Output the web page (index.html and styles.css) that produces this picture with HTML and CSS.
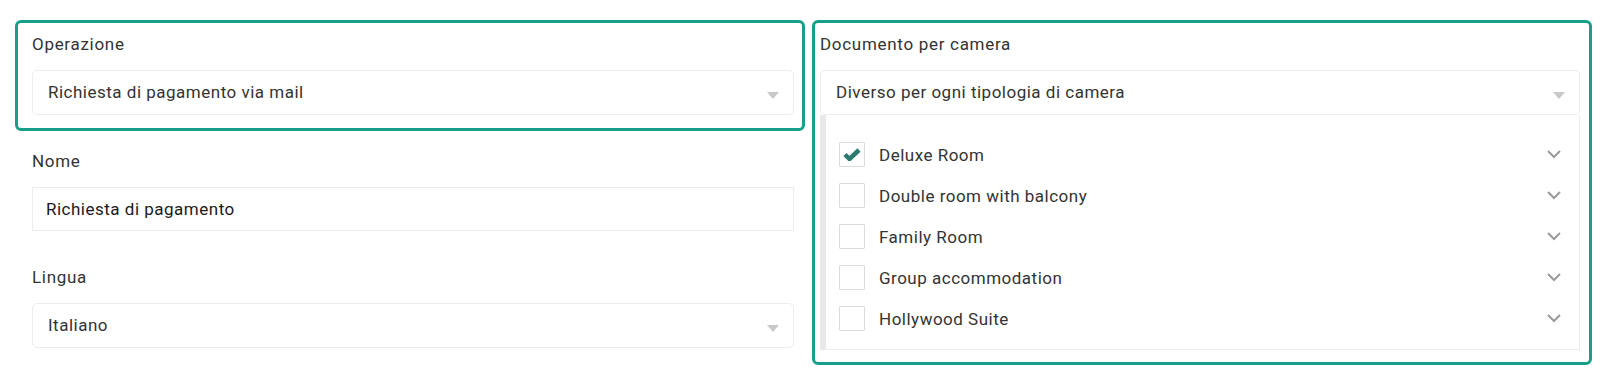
FILE: index.html
```html
<!DOCTYPE html>
<html lang="it">

<head>
  <meta charset="UTF-8">
  <title>Documento</title>
  <link rel="stylesheet" href="styles.css">
</head>

<body>
  <div class="g-wrap">
    <div class="col-l">
      <div class="field hl hl-l">
        <label class="lbl">Operazione</label>
        <div class="sel">Richiesta di pagamento via mail<span class="caret"></span></div>
      </div>
      <div class="field plain">
        <label class="lbl">Nome</label>
        <div class="inp">Richiesta di pagamento</div>
      </div>
      <div class="field plain gap">
        <label class="lbl">Lingua</label>
        <div class="sel">Italiano<span class="caret"></span></div>
      </div>
    </div>
    <div class="col-r">
      <div class="field hl hl-r">
        <label class="lbl">Documento per camera</label>
        <div class="sel">Diverso per ogni tipologia di camera<span class="caret"></span></div>
        <ul class="list">
          <li class="item">
            <span class="chk on">
              <svg width="18" height="13" viewBox="0 0 18 13"><polyline points="2,6.5 6.5,11 16,2" fill="none" stroke="#2b7a70" stroke-width="4.5"/></svg>
            </span>
            <span class="name">Deluxe Room</span>
            <svg class="arr" width="14" height="9" viewBox="0 0 14 9"><polyline points="1,1 7,7 13,1" fill="none" stroke="#9a9a9a" stroke-width="2"/></svg>
          </li>
          <li class="item">
            <span class="chk"></span>
            <span class="name">Double room with balcony</span>
            <svg class="arr" width="14" height="9" viewBox="0 0 14 9"><polyline points="1,1 7,7 13,1" fill="none" stroke="#9a9a9a" stroke-width="2"/></svg>
          </li>
          <li class="item">
            <span class="chk"></span>
            <span class="name">Family Room</span>
            <svg class="arr" width="14" height="9" viewBox="0 0 14 9"><polyline points="1,1 7,7 13,1" fill="none" stroke="#9a9a9a" stroke-width="2"/></svg>
          </li>
          <li class="item">
            <span class="chk"></span>
            <span class="name">Group accommodation</span>
            <svg class="arr" width="14" height="9" viewBox="0 0 14 9"><polyline points="1,1 7,7 13,1" fill="none" stroke="#9a9a9a" stroke-width="2"/></svg>
          </li>
          <li class="item">
            <span class="chk"></span>
            <span class="name">Hollywood Suite</span>
            <svg class="arr" width="14" height="9" viewBox="0 0 14 9"><polyline points="1,1 7,7 13,1" fill="none" stroke="#9a9a9a" stroke-width="2"/></svg>
          </li>
        </ul>
      </div>
    </div>
  </div>
</body>

</html>
```

FILE: styles.css
```css
* {
  margin: 0;
  padding: 0;
  box-sizing: border-box;
}

html,
body {
  width: 100%;
  height: 100%;
  background: #fff;
}

body {
  font-family: Roboto, "Liberation Sans", sans-serif;
  font-size: 17px;
  letter-spacing: 0.5px;
  color: #333;
}

ul {
  list-style: none;
}

.g-wrap {
  display: flex;
  gap: 7px;
  padding: 20px 8px 0 15px;
}

.col-l {
  width: 790px;
}

.col-r {
  flex: 1;
}

.field {
  display: flex;
  flex-direction: column;
}

.lbl {
  line-height: 24px;
  margin-bottom: 14px;
  color: #333;
  letter-spacing: 0.7px;
}

.hl {
  border: 3px solid #16a08a;
  border-radius: 6px;
  padding-top: 9px;
  padding-bottom: 13px;
}

.hl-l {
  padding-left: 14px;
  padding-right: 8px;
}

.hl-r {
  padding-left: 5px;
  padding-right: 9px;
  padding-bottom: 12px;
}

.plain {
  margin: 18px 11px 0 17px;
}

.plain.gap {
  margin-top: 34px;
}

.sel {
  position: relative;
  height: 45px;
  line-height: 43px;
  padding-left: 15px;
  border: 1px solid #ededed;
  border-radius: 5px;
  color: #333;
}

.caret {
  position: absolute;
  right: 14px;
  top: 21px;
  width: 0;
  height: 0;
  border-left: 6px solid transparent;
  border-right: 6px solid transparent;
  border-top: 7px solid #c8c8c8;
}

.inp {
  height: 44px;
  line-height: 42px;
  padding-left: 13px;
  border: 1px solid #ededed;
  color: #1a1a1a;
}

.list {
  border-left: 6px solid #e8e8e8;
  border-right: 1px solid #ececec;
  border-bottom: 1px solid #ececec;
  padding: 19px 18px 10px 13px;
}

.item {
  display: flex;
  align-items: center;
  height: 41px;
}

.chk {
  display: flex;
  align-items: center;
  justify-content: center;
  width: 26px;
  height: 25px;
  border: 1px solid #dcdcdc;
  border-radius: 1px;
  margin-right: 14px;
}

.name {
  flex: 1;
  color: #333;
}
```
